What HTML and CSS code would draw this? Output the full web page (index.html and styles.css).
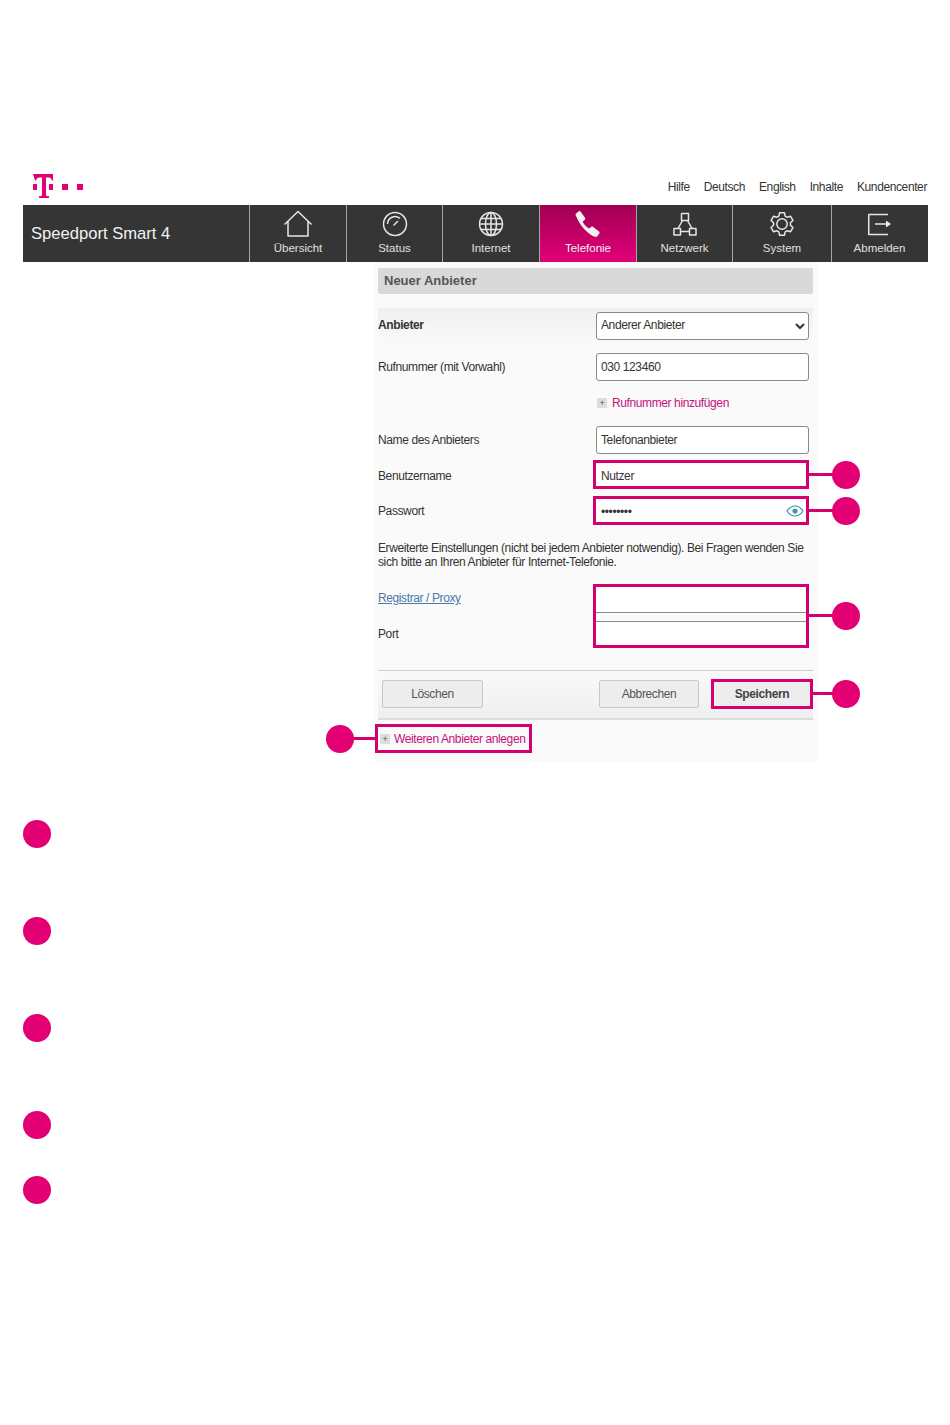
FILE: index.html
```html
<!DOCTYPE html>
<html lang="de">
<head>
    <meta charset="UTF-8">
    <title>Speedport Smart 4</title>
    <link rel="stylesheet" href="styles.css">
</head>
<body>
    <div id="header">
        <svg class="logo" width="52" height="26" viewBox="0 0 52 26">
            <path d="M1 1h20v6.500h-1.200c-.2-1.700-1.300-3-3.300-3h-2.500v17c0 1.300.5 1.700 1.800 1.700h1.200v1.800h-10v-1.800h1.200c1.300 0 1.800-.4 1.800-1.700v-17h-2.500c-2 0-3.100 1.300-3.300 3h-1.200z"/>
            <rect x="1" y="11" width="4" height="6"/>
            <rect x="17" y="11" width="4" height="6"/>
            <rect x="30" y="11" width="6" height="6"/>
            <rect x="45" y="11" width="6" height="6"/>
        </svg>
        <div id="top-links">
            <a href="#">Hilfe</a>
            <a href="#">Deutsch</a>
            <a href="#">English</a>
            <a href="#">Inhalte</a>
            <a href="#">Kundencenter</a>
        </div>
    </div>

    <div id="nav">
        <div id="device-name">Speedport Smart 4</div>
        <a class="nav-item w97" href="#">
            <svg width="30" height="28" viewBox="0 0 30 28"><path d="M1.500 14.500 15 1.500l13.500 13M5 11.500v14.500h20v-14.500"/></svg>
            <span>Übersicht</span>
        </a>
        <a class="nav-item w96" href="#">
            <svg width="30" height="28" viewBox="0 0 30 28"><circle cx="15" cy="14" r="11.500"/><path d="M7.500 14a7.500 7.500 0 0 1 12.500-5.500"/><path d="M13.500 15.500 18 11"/></svg>
            <span>Status</span>
        </a>
        <a class="nav-item w97" href="#">
            <svg width="30" height="28" viewBox="0 0 30 28"><circle cx="15" cy="14" r="11.500"/><ellipse cx="15" cy="14" rx="5.500" ry="11.500"/><path d="M15 2.500v23M3.500 14h23M5 8.500h20M5 19.500h20"/></svg>
            <span>Internet</span>
        </a>
        <a class="nav-item w97 active" href="#">
            <svg width="30" height="28" viewBox="0 0 30 28"><path class="solid" d="M2 4.500 5.500 1.500c.8-.6 1.600-.5 2.200.3l4.300 6c.5.700.4 1.400-.2 2l-2.200 2c1.500 2.800 3.500 5 6.200 6.700l2.400-1.600c.7-.5 1.400-.4 2 .1l5.800 4.500c.7.6.8 1.400.3 2.100l-2 2.600c-.6.700-1.300.9-2.300.6-3-.9-5.200-2.600-6.500-3.700-5.500-4.300-9.700-10-12.700-17.500-.4-1-.3-1.800.2-2.400z"/></svg>
            <span>Telefonie</span>
        </a>
        <a class="nav-item w96" href="#">
            <svg width="30" height="28" viewBox="0 0 30 28"><rect x="11.500" y="3.500" width="7" height="7"/><rect x="4" y="18.500" width="6.500" height="6.500"/><rect x="19.500" y="18.500" width="6.500" height="6.500"/><path d="M12.500 10.500 8 18.500M17.500 10.500 22 18.500M10.500 21.500h9"/></svg>
            <span>Netzwerk</span>
        </a>
        <a class="nav-item w99" href="#">
            <svg width="30" height="28" viewBox="0 0 30 28"><path d="M11.820 6.120 12.610 2.750H17.390L18.180 6.120 20.230 7.300 23.550 6.310 25.940 10.450 23.420 12.820V15.180L25.940 17.550 23.550 21.690 20.230 20.700 18.180 21.880 17.390 25.250H12.610L11.820 21.880 9.770 20.700 6.450 21.690 4.060 17.550 6.580 15.180V12.820L4.060 10.450 6.450 6.310 9.770 7.300z"/><circle cx="15" cy="14" r="5.200"/></svg>
            <span>System</span>
        </a>
        <a class="nav-item w96" href="#">
            <svg width="30" height="28" viewBox="0 0 30 28"><path d="M23 4.500H3.750v20H23M10 14h13"/><path class="solid" d="M21 10.500l5 3.500-5 3.500z"/></svg>
            <span>Abmelden</span>
        </a>
    </div>

    <div id="panel">
        <div id="panel-title">Neuer Anbieter</div>

        <div class="row row-first">
            <label class="bold">Anbieter</label>
            <select class="field"><option>Anderer Anbieter</option></select>
        </div>
        <div class="row row-phone">
            <label>Rufnummer (mit Vorwahl)</label>
            <input class="field" type="text" value="030 123460">
        </div>
        <div class="row row-add">
            <label></label>
            <a class="add-link" href="#"><span class="plus">+</span>Rufnummer hinzufügen</a>
        </div>
        <div class="row row-name">
            <label>Name des Anbieters</label>
            <input class="field" type="text" value="Telefonanbieter">
        </div>
        <div class="row row-user">
            <label>Benutzername</label>
            <div class="mark mark-field">
                <input class="field plain" type="text" value="Nutzer">
                <i class="callout right"></i><b class="dot right"></b>
            </div>
        </div>
        <div class="row row-pass">
            <label>Passwort</label>
            <div class="mark mark-field">
                <input class="field plain" type="password" value="12345678">
                <svg class="eye" width="18" height="12" viewBox="0 0 18 12"><path d="M1 6c2-3 5-5 8-5s6 2 8 5c-2 3-5 5-8 5s-6-2-8-5z"/><circle class="pupil" cx="9" cy="6" r="2"/></svg>
                <i class="callout right"></i><b class="dot right"></b>
            </div>
        </div>

        <p id="hint">Erweiterte Einstellungen (nicht bei jedem Anbieter notwendig). Bei Fragen wenden Sie sich bitte an Ihren Anbieter für Internet-Telefonie.</p>

        <div id="extra">
            <div id="extra-labels">
                <a class="proxy" href="#">Registrar / Proxy</a>
                <label>Port</label>
            </div>
            <div class="mark mark-double">
                <input class="field double" type="text">
                <input class="field double" type="text">
                <i class="callout right"></i><b class="dot right"></b>
            </div>
        </div>

        <div id="buttons">
            <button class="btn btn-delete">Löschen</button>
            <button class="btn btn-cancel">Abbrechen</button>
            <div class="mark mark-save">
                <button class="btn btn-save">Speichern</button>
                <i class="callout right short"></i><b class="dot right short"></b>
            </div>
        </div>

        <div class="mark mark-more">
            <a class="add-link" href="#"><span class="plus">+</span>Weiteren Anbieter anlegen</a>
            <i class="callout left"></i><b class="dot left"></b>
        </div>
    </div>

    <div id="legend">
        <div class="legend-dot"></div>
        <div class="legend-dot"></div>
        <div class="legend-dot"></div>
        <div class="legend-dot"></div>
        <div class="legend-dot last"></div>
    </div>
</body>
</html>
```

FILE: styles.css
```css
body {
    font-family: "Liberation Sans", Arial, sans-serif;
    font-size: 12px;
    letter-spacing: -.39px;
    color: #333;
    background-color: #fff;
    margin: 0;
    padding: 0;
}

a {
    text-decoration: none;
}

#header {
    height: 205px;
    margin-left: 32px;
    margin-right: 23px;
    display: flex;
    justify-content: space-between;
    align-items: flex-start;
}

.logo {
    fill: #e20074;
    margin-top: 173px;
}

#top-links {
    display: flex;
    gap: 14px;
    margin-top: 180px;
    line-height: 15px;
}

#top-links a {
    color: #333;
}

#nav {
    display: flex;
    height: 57px;
    margin-left: 23px;
    width: 905px;
    background-color: #353535;
    font-size: 11.500px;
    letter-spacing: 0;
}

#device-name {
    width: 218px;
    padding-left: 8px;
    font-size: 16.600px;
    line-height: 57px;
    color: #f2f2f2;
}

.nav-item {
    display: flex;
    flex-direction: column;
    align-items: center;
    box-sizing: border-box;
    border-left: 1px solid #a5a5a5;
    padding-top: 5px;
    color: #e0e0e0;
    line-height: 14px;
}

.nav-item span {
    margin-top: 3px;
}

.nav-item svg {
    fill: none;
    stroke: #e6e6e6;
    stroke-width: 1.500;
    stroke-linejoin: round;
}

.nav-item svg .solid {
    fill: #f2f2f2;
    stroke: none;
}

.w96 { width: 96px; }
.w97 { width: 97px; }
.w99 { width: 99px; }

.active {
    background: linear-gradient(#a00052, #e2007a);
    color: #f4f4f4;
}

#panel {
    box-sizing: border-box;
    width: 444px;
    height: 500px;
    margin-left: 374px;
    padding: 6px 5px 0 4px;
    background-color: #fafafa;
}

#panel-title {
    height: 26px;
    border-radius: 2px;
    background-color: #d9d9d9;
    padding-left: 6px;
    font-size: 13px;
    font-weight: bold;
    letter-spacing: 0;
    line-height: 26px;
    color: #555;
}

.row {
    display: flex;
    align-items: center;
    height: 28px;
}

.row label {
    width: 218px;
}

.row .bold {
    font-weight: bold;
    margin-top: -2px;
}

.row-first {
    margin-top: 14px;
    height: 36px;
    background: linear-gradient(#efefef, #fafafa);
}

.row-phone { margin-top: 9px; }
.row-add { margin-top: 12px; height: 20px; }
.row-name { margin-top: 13px; }
.row-user { margin-top: 6px; height: 29px; }
.row-user label { margin-top: 2px; }
.row-pass { margin-top: 7px; height: 29px; }

.field {
    box-sizing: border-box;
    width: 213px;
    height: 28px;
    padding: 0 4px;
    border: 1px solid #8a8a8a;
    border-radius: 3px;
    background-color: #fff;
    font-family: "Liberation Sans", Arial, sans-serif;
    font-size: 12px;
    letter-spacing: -.39px;
    color: #333;
}

select.field {
    padding: 0 0 2px;
}

.plain {
    display: block;
    height: 23px;
    width: 210px;
    border: none;
    border-radius: 0;
    padding: 2px 5px 0;
}

.add-link {
    display: flex;
    align-items: center;
    color: #c4107a;
    white-space: nowrap;
}

.plus {
    width: 10px;
    height: 10px;
    margin-left: 1px;
    margin-right: 5px;
    background-color: #ddd;
    color: #555;
    font-size: 9px;
    line-height: 10px;
    text-align: center;
}

/* pink frames with callout line and dot */
.mark {
    position: relative;
    box-sizing: border-box;
    border: 3px solid #d4006f;
}

.mark-field {
    margin-left: -3px;
    width: 216px;
    height: 29px;
}

.callout {
    position: absolute;
    top: 50%;
    height: 3px;
    margin-top: -2px;
    background-color: #d4006f;
}

.callout.right {
    left: 100%;
    width: 26px;
    margin-left: 3px;
}

.callout.left {
    right: 100%;
    width: 24px;
    margin-right: 3px;
}

.dot {
    position: absolute;
    top: 50%;
    width: 28px;
    height: 28px;
    margin-top: -14px;
    border-radius: 50%;
    background-color: #e20074;
}

.dot.right {
    left: 100%;
    margin-left: 26px;
}

.dot.left {
    right: 100%;
    margin-right: 24px;
}

.eye {
    position: absolute;
    right: 2px;
    top: 6px;
    fill: none;
    stroke: #3f8fa8;
    stroke-width: 1.200;
}

.eye .pupil {
    fill: #3f8fa8;
}

#hint {
    margin: 16px 0 0;
    line-height: 14px;
    width: 430px;
}

#extra {
    display: flex;
    margin-top: 15px;
}

#extra-labels {
    width: 215px;
    display: flex;
    flex-direction: column;
    padding-top: 7px;
    gap: 22px;
}

#extra-labels a, #extra-labels label {
    line-height: 14px;
}

.proxy {
    color: #4a78a8;
    text-decoration: underline;
}

.mark-double {
    width: 216px;
    height: 64px;
    display: flex;
    flex-direction: column;
    gap: 8px;
    background-color: #fafafa;
}

.double {
    width: 210px;
    height: 26px;
    border: none;
    border-radius: 0;
    border-bottom: 1px solid #8a8a8a;
}

.double + .double {
    border-bottom: none;
    border-top: 1px solid #8a8a8a;
    height: 24px;
}

#buttons {
    display: flex;
    align-items: center;
    height: 45px;
    margin-top: 22px;
    padding-left: 4px;
    padding-bottom: 2px;
    border-top: 1px solid #d0d0d0;
    border-bottom: 2px solid #dcdcdc;
    background: linear-gradient(#fafafa, #efefef);
}

.btn {
    box-sizing: border-box;
    width: 101px;
    height: 28px;
    border: 1px solid #c8c8c8;
    border-radius: 2px;
    background-color: #ededed;
    font-family: "Liberation Sans", Arial, sans-serif;
    font-size: 12px;
    letter-spacing: -.39px;
    color: #555;
}

.btn-cancel {
    margin-left: 116px;
    width: 100px;
}

.mark-save {
    margin-left: 12px;
    width: 102px;
    height: 30px;
}

.btn-save {
    display: block;
    width: 96px;
    height: 24px;
    border: none;
    font-weight: bold;
    color: #444;
}

.dot.short {
    margin-left: 22px;
}

.callout.short {
    width: 20px;
}

.mark-more {
    margin-top: 4px;
    margin-left: -3px;
    width: 157px;
    height: 29px;
    display: flex;
    align-items: center;
    padding-left: 1px;
}

.mark-more .plus {
    margin-right: 4px;
}

#legend {
    display: flex;
    flex-direction: column;
    padding: 58px 0 220px 23px;
}

.legend-dot {
    width: 28px;
    height: 28px;
    margin-bottom: 69px;
    border-radius: 50%;
    background-color: #e20074;
}

.legend-dot:nth-child(4) {
    margin-bottom: 37px;
}

.legend-dot.last {
    margin-bottom: 0;
}
```
